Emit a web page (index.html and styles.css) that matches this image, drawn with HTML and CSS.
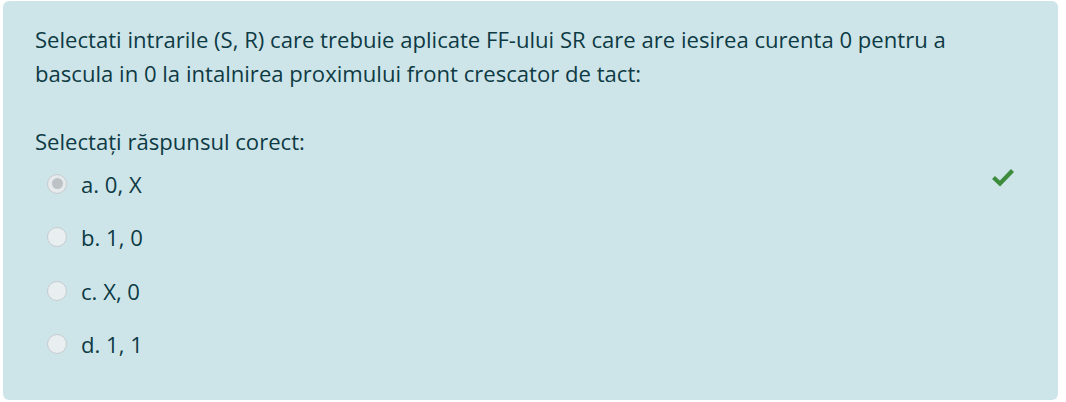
FILE: index.html
```html
<!DOCTYPE html>
<html lang="ro">
<head>
<meta charset="utf-8">
<link rel="stylesheet" href="styles.css">
</head>
<body>
<div class="formulation">
  <div class="qtext">Selectati intrarile (S, R) care trebuie aplicate FF-ului SR care are iesirea curenta 0 pentru a bascula in 0 la intalnirea proximului front crescator de tact:</div>
  <div class="ablock">
    <div class="prompt">Selectați răspunsul corect:</div>
    <div class="answers">
      <div class="option checked">
        <span class="radio"></span>
        <span class="label">a. 0, X</span>
        <svg class="tick" viewBox="0 0 24 20" width="24" height="20" aria-hidden="true"><path d="M2.5 10.5 L9 16.5 L21.5 3.5" fill="none" stroke="#3d8b3d" stroke-width="4.2" stroke-linejoin="miter"/></svg>
      </div>
      <div class="option">
        <span class="radio"></span>
        <span class="label">b. 1, 0</span>
      </div>
      <div class="option">
        <span class="radio"></span>
        <span class="label">c. X, 0</span>
      </div>
      <div class="option">
        <span class="radio"></span>
        <span class="label">d. 1, 1</span>
      </div>
    </div>
  </div>
</div>
</body>
</html>
```
FILE: styles.css
```css
* { box-sizing: border-box; }
html, body { margin: 0; padding: 0; background: #ffffff; }
body {
  font-family: "Open Sans", "Noto Sans", sans-serif;
  color: #0e3a44;
  font-size: 22.1px;
  line-height: 34px;
  padding: 1px 8px 2px 3px;
}
.formulation {
  background: #cde5e9;
  border-radius: 6px;
  height: 399px;
  padding: 21px 100px 0 32px;
}
.qtext {
  margin-bottom: 34px;
}
.answers {
  display: flex;
  flex-direction: column;
}
.option {
  display: flex;
  align-items: center;
  height: 53.5px;
  position: relative;
}
.option:first-child { margin-top: -1px; }
.radio {
  width: 20px;
  height: 20px;
  border-radius: 50%;
  border: 1px solid #c6ccd0;
  background: #e9eef0;
  margin: 0 14px 0 12px;
  flex: none;
  position: relative;
}
.option.checked .radio {
  background: #e6eaec;
}
.option.checked .radio::after {
  content: "";
  position: absolute;
  left: 3.5px; top: 3.5px;
  width: 11px; height: 11px;
  border-radius: 50%;
  background: #bcc2c5;
}
.tick {
  position: absolute;
  left: 956px;
  top: 10px;
}
```
